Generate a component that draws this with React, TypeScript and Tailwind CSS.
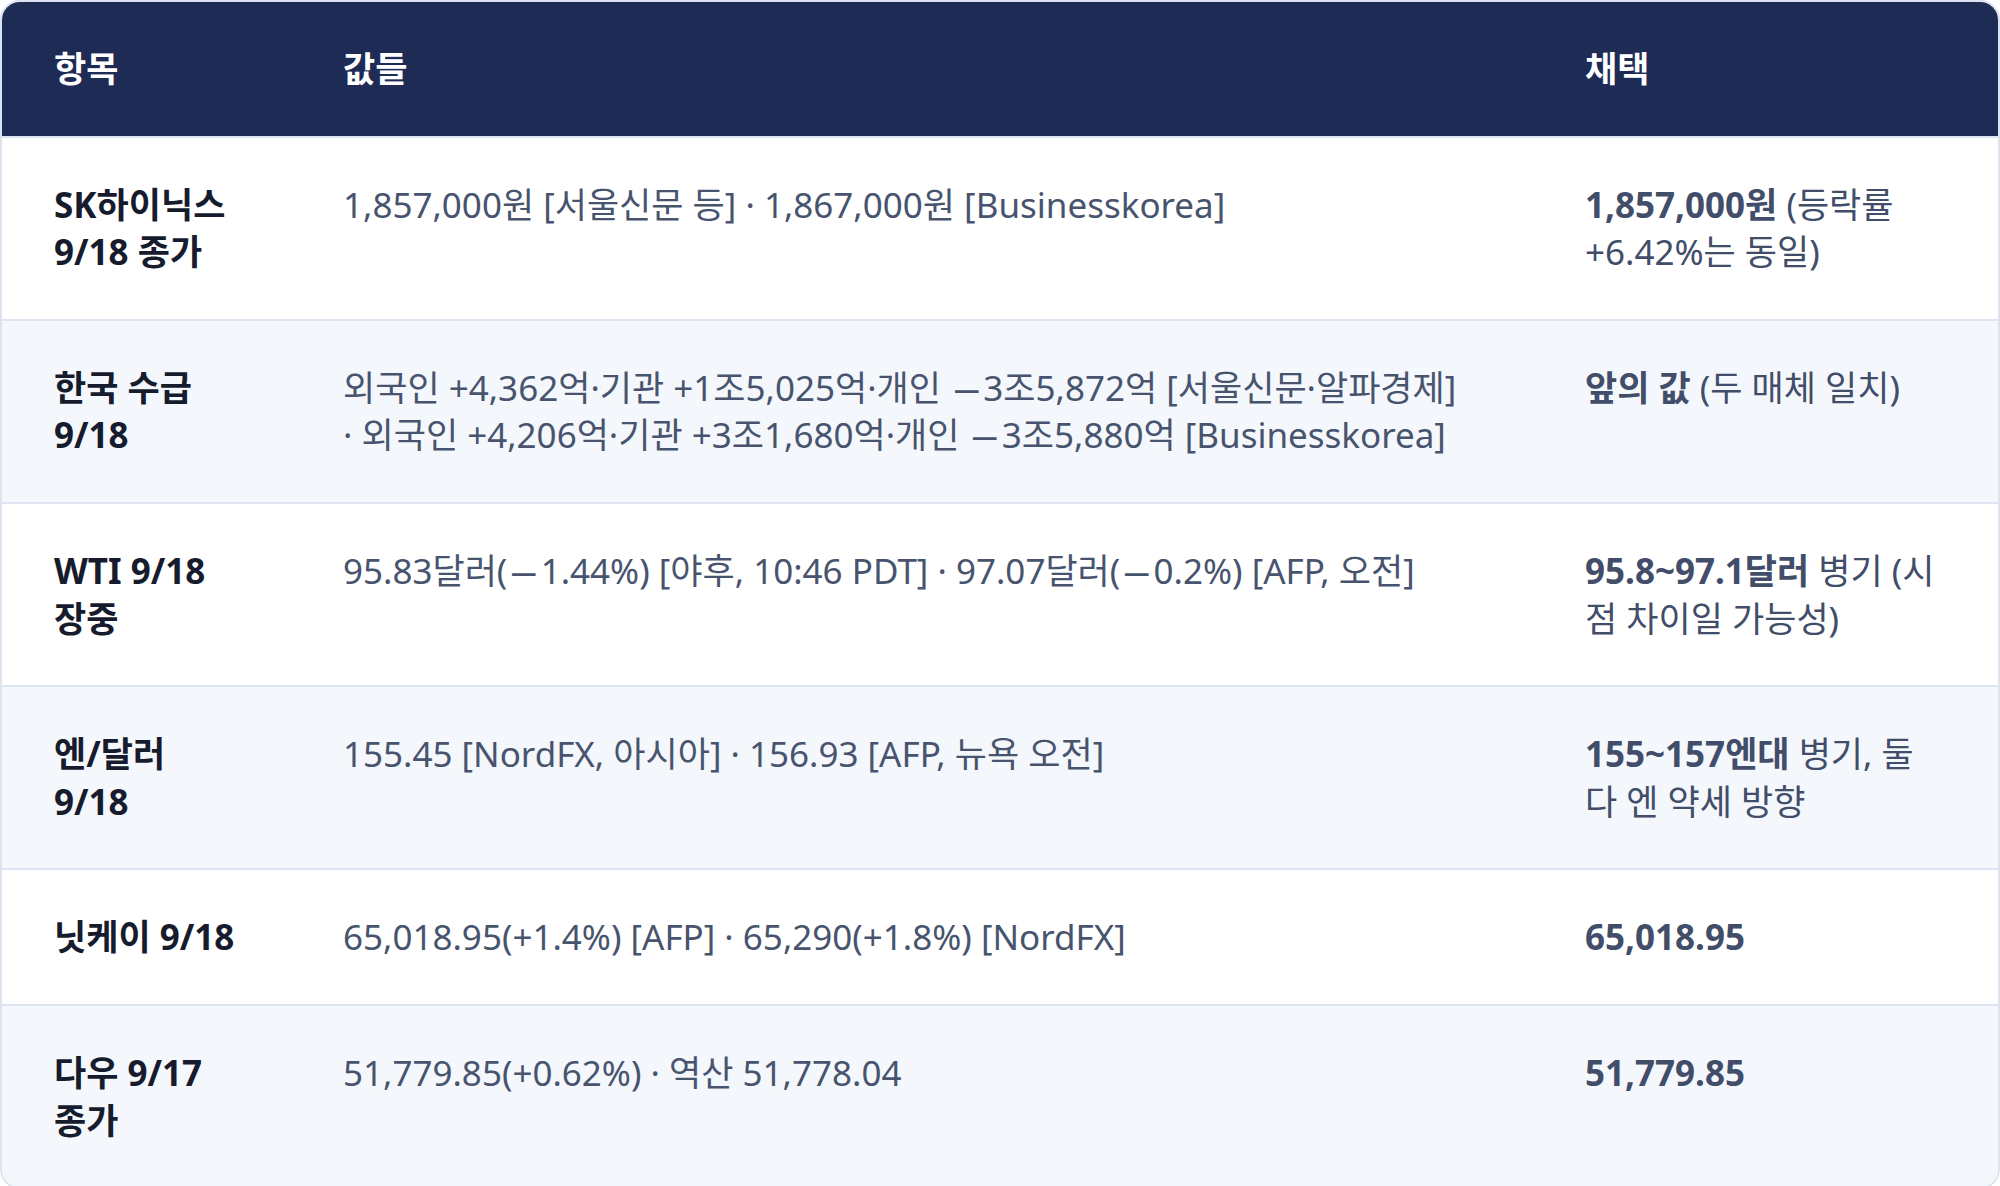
import React from 'react';

type Row = {
  item: string;
  values: string;
  pick: string;
  note?: string;
};

const rows: Row[] = [
  {
    item: 'SK하이닉스 9/18 종가',
    values: '1,857,000원 [서울신문 등] · 1,867,000원 [Businesskorea]',
    pick: '1,857,000원',
    note: ' (등락률 +6.42%는 동일)',
  },
  {
    item: '한국 수급 9/18',
    values:
      '외국인 +4,362억·기관 +1조5,025억·개인 –3조5,872억 [서울신문·알파경제] ·\u00a0외국인 +4,206억·기관 +3조1,680억·개인 –3조5,880억 [Businesskorea]',
    pick: '앞의 값',
    note: ' (두 매체 일치)',
  },
  {
    item: 'WTI 9/18 장중',
    values: '95.83달러(–1.44%) [야후, 10:46 PDT] · 97.07달러(–0.2%) [AFP, 오전]',
    pick: '95.8~97.1달러',
    note: ' 병기 (시점 차이일 가능성)',
  },
  {
    item: '엔/달러 9/18',
    values: '155.45 [NordFX, 아시아] · 156.93 [AFP, 뉴욕 오전]',
    pick: '155~157엔대',
    note: ' 병기, 둘 다 엔 약세 방향',
  },
  {
    item: '닛케이 9/18',
    values: '65,018.95(+1.4%) [AFP] · 65,290(+1.8%) [NordFX]',
    pick: '65,018.95',
  },
  {
    item: '다우 9/17 종가',
    values: '51,779.85(+0.62%) · 역산 51,778.04',
    pick: '51,779.85',
  },
];

const grid = 'grid grid-cols-[289px_1fr_465px]';
const cell = 'px-[52px] py-[43px]';

// the source font draws the dash wide
function withDashes(text: string) {
  return text.split('–').map((part, i) => (
    <React.Fragment key={i}>
      {i > 0 && (
        <span className="inline-block w-[0.95em] text-center">
          <span className="inline-block scale-x-[1.6]">–</span>
        </span>
      )}
      {part}
    </React.Fragment>
  ));
}

export default function App() {
  return (
    <div
      className="min-h-screen bg-white"
      style={{ fontFamily: '"Noto Sans", "Noto Sans CJK KR", sans-serif' }}
    >
      <div className="w-full overflow-hidden rounded-[20px] border-2 border-[#dce3ef] text-[35px] leading-[47.6px]">
        <div className={`${grid} bg-[#1e2b54] font-bold text-white`}>
          <div className={cell}>항목</div>
          <div className={cell}>값들</div>
          <div className={cell}>채택</div>
        </div>
        {rows.map((row, i) => (
          <div
            key={row.item}
            className={`${grid} border-t-2 border-[#dfe5f0] ${i % 2 === 1 ? 'bg-[#f4f7fc]' : 'bg-white'}`}
          >
            <div className={`${cell} font-bold text-[#161c2d]`}>{row.item}</div>
            <div className={`${cell} text-[#48546e]`}>{withDashes(row.values)}</div>
            <div className={`${cell} text-[#414d69]`}>
              <span className="font-bold">{row.pick}</span>
              {row.note}
            </div>
          </div>
        ))}
      </div>
    </div>
  );
}
